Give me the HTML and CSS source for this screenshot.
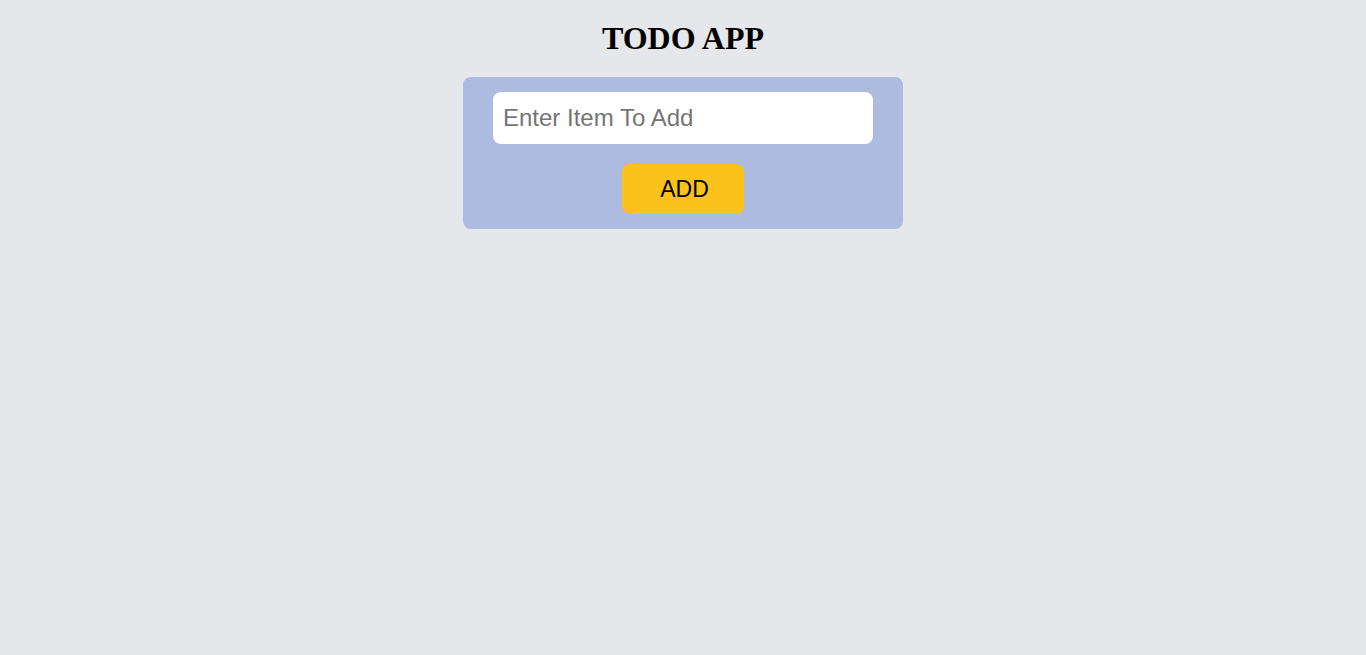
FILE: index.html
```html
<!DOCTYPE html>
<html lang="en">
<head>
<meta charset="utf-8">
<title>Todo App</title>
<link rel="stylesheet" href="styles.css">
</head>
<body>
  <main class="app">
    <h1 class="title">TODO APP</h1>
    <form class="card" onsubmit="return false">
      <input class="item-input" type="text" placeholder="Enter Item To Add">
      <button class="add-btn" type="submit">ADD</button>
    </form>
  </main>
</body>
</html>
```
FILE: styles.css
```css
html, body {
  margin: 0;
  padding: 0;
  background: #e5e7eb;
  height: 100%;
}
.app {
  display: flex;
  flex-direction: column;
  align-items: center;
  padding-top: 20px;
}
.title {
  margin: 0 0 20px;
  font-family: "Liberation Serif", "Times New Roman", serif;
  font-size: 32px;
  line-height: 37px;
  font-weight: bold;
  color: #000;
}
.card {
  width: 440px;
  box-sizing: border-box;
  padding: 15px 30px;
  background: #aebbe0;
  border-radius: 8px;
  display: flex;
  flex-direction: column;
  align-items: center;
  gap: 20px;
  margin: 0;
}
.item-input {
  width: 380px;
  height: 52px;
  box-sizing: border-box;
  border: none;
  border-radius: 8px;
  background: #fff;
  padding: 0 10px;
  font-family: "Liberation Sans", Arial, sans-serif;
  font-size: 24px;
  color: #000;
  outline: none;
}
.item-input::placeholder {
  color: #757575;
}
.add-btn {
  width: 122px;
  height: 50px;
  border: none;
  border-radius: 8px;
  background: #fbc21b;
  color: #000;
  font-family: "Liberation Sans", Arial, sans-serif;
  font-size: 23px;
  padding: 0 0 0 3px;
  cursor: pointer;
}
```
